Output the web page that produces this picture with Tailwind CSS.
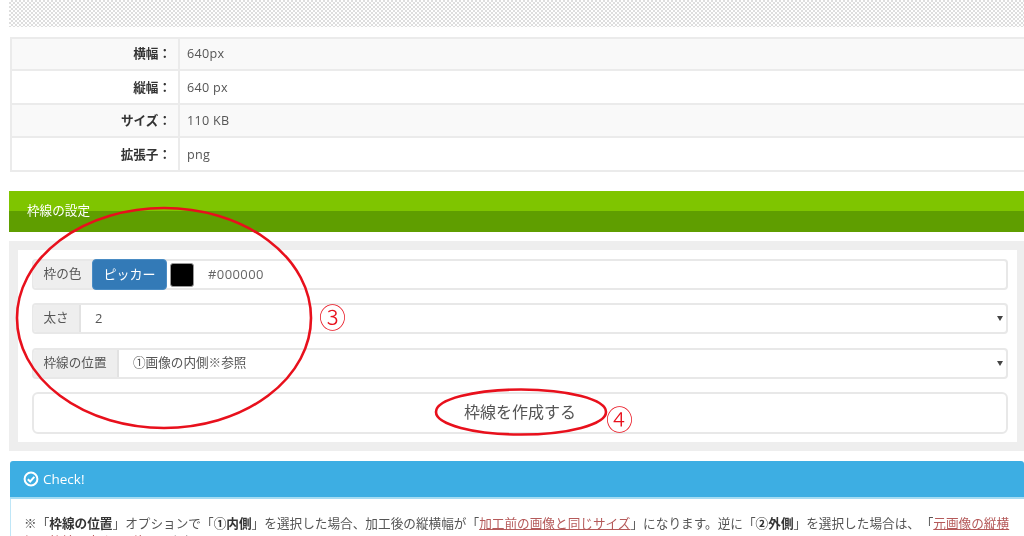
<!DOCTYPE html>
<html lang="ja">
<head>
<meta charset="utf-8">
<script src="https://cdn.jsdelivr.net/npm/@tailwindcss/browser@4"></script>
</head>
<body class="bg-white">
<div class="relative w-[1024px] h-[536px] overflow-hidden bg-white font-['Open_Sans','Noto_Sans_CJK_JP',sans-serif] text-[12.6px] text-[#555] blur-[0.35px]">
  <div class="ml-[9px] h-[27px] bg-[repeating-conic-gradient(#dedede_0_25%,#fff_0_50%)] bg-[length:4px_4px]"></div>

  <div class="ml-[10px] mt-[10px] border-2 border-[#ebebeb] border-r-0 text-[12.6px]">
    <div class="flex h-[32px] items-center bg-[#f9f9f9] border-b-2 border-[#ebebeb]">
      <div class="w-[168px] h-full flex items-center justify-end pr-[7px] border-r-2 border-[#ebebeb] font-bold text-[#333]">横幅：</div>
      <div class="pl-[7px] tracking-[0.3px]">640px</div>
    </div>
    <div class="flex h-[34px] items-center bg-white border-b-2 border-[#ebebeb]">
      <div class="w-[168px] h-full flex items-center justify-end pr-[7px] pt-[2px] border-r-2 border-[#ebebeb] font-bold text-[#333]">縦幅：</div>
      <div class="pl-[7px] pt-[2px] tracking-[0.3px]">640 px</div>
    </div>
    <div class="flex h-[33px] items-center bg-[#f9f9f9] border-b-2 border-[#ebebeb]">
      <div class="w-[168px] h-full flex items-center justify-end pr-[7px] pt-[2px] border-r-2 border-[#ebebeb] font-bold text-[#333]">サイズ：</div>
      <div class="pl-[7px] pt-[2px] tracking-[0.3px]">110 KB</div>
    </div>
    <div class="flex h-[32px] items-center bg-white">
      <div class="w-[168px] h-full flex items-center justify-end pr-[7px] pt-[2px] border-r-2 border-[#ebebeb] font-bold text-[#333]">拡張子：</div>
      <div class="pl-[7px] pt-[2px] tracking-[0.3px]">png</div>
    </div>
  </div>

  <div class="ml-[9px] mt-[19px] h-[41px] flex items-center pl-[18px] text-[12.6px] text-white bg-[linear-gradient(#7fc500_0,#7fc500_50%,#5f9e00_50%,#5f9e00_100%)]">枠線の設定</div>

  <div class="ml-[9px] mt-[9px] h-[210px] bg-[#eeeeee] py-[9px] pl-[9px] pr-[7px]">
    <div class="h-[192px] bg-white pl-[14px] pr-[9px] pt-[9px] flex flex-col">
      <div class="flex h-[31px] items-stretch border-2 border-[#e8e8e8] rounded-[4px] bg-white">
        <div class="w-[59px] -ml-[1px] flex items-center justify-center bg-[#eeeeee] text-[12.6px] text-[#555] rounded-l-[4px]">枠の色</div>
        <div class="w-[75px] -my-[2px] flex items-center justify-center bg-[#337ab7] border border-[#4a8cc4] rounded-[4px] text-[13px] text-white">ピッカー</div>
        <div class="w-[24px] h-[24px] ml-[3px] self-center bg-black rounded-[3px] border border-[#999]"></div>
        <div class="ml-[14px] flex items-center text-[13px] text-[#666] tracking-[0.4px]">#000000</div>
      </div>
      <div class="flex h-[31px] mt-[13px] items-stretch border-2 border-[#e8e8e8] rounded-[4px] bg-white">
        <div class="w-[48px] -ml-[1px] flex items-center justify-center bg-[#eeeeee] border-r-2 border-[#e2e2e2] text-[12.6px] text-[#555] rounded-l-[4px]">太さ</div>
        <div class="flex-1 flex items-center pl-[14px] text-[13px] text-[#555]">2</div>
        <div class="flex items-center pr-[3px]"><svg width="6" height="5" viewBox="0 0 6 5"><path d="M0 0H6L3 5Z" fill="#444"/></svg></div>
      </div>
      <div class="flex h-[31px] mt-[14px] items-stretch border-2 border-[#e8e8e8] rounded-[4px] bg-white">
        <div class="w-[86px] -ml-[1px] flex items-center justify-center bg-[#eeeeee] border-r-2 border-[#e2e2e2] text-[12.6px] text-[#555] rounded-l-[4px]">枠線の位置</div>
        <div class="flex-1 flex items-center pl-[14px] text-[12.6px] text-[#555]">①画像の内側※参照</div>
        <div class="flex items-center pr-[3px]"><svg width="6" height="5" viewBox="0 0 6 5"><path d="M0 0H6L3 5Z" fill="#444"/></svg></div>
      </div>
      <div class="flex h-[42px] mt-[13px] pb-[3px] items-center justify-center border-2 border-[#e8e8e8] rounded-[6px] bg-white text-[16px] text-[#555]">枠線を作成する</div>
    </div>
  </div>

  <div class="ml-[10px] mt-[10px] h-[38px] flex items-center gap-[4px] pl-[13px] bg-[#3daee3] rounded-t-[3px] border-b-2 border-[#a5dcf3] text-[13.5px] text-white">
    <svg class="w-[16px] h-[16px]" viewBox="0 0 16 16" fill="none"><circle cx="8" cy="8" r="6.4" stroke="#fff" stroke-width="2"/><path d="M4.8 8.2 7.2 10.5 11.3 5.9" stroke="#fff" stroke-width="2"/></svg>
    <span>Check!</span>
  </div>
  <div class="ml-[10px] border-l border-[#bfe6f7] pl-[13px] pt-[15px] text-[12.65px] leading-[18px] text-[#555] w-[1004px]">※「<b class="text-[#333]">枠線の位置</b>」オプションで「<b class="text-[#333]">①内側</b>」を選択した場合、加工後の縦横幅が「<span class="underline text-[#b55a5a]">加工前の画像と同じサイズ</span>」になります。逆に「<b class="text-[#333]">②外側</b>」を選択した場合は、<span class="ml-[7px]">「</span><span class="underline text-[#b55a5a]">元画像の縦横幅＋枠線の太さの2倍</span>」になります。</div>

  <svg class="absolute left-0 top-0 pointer-events-none" width="1024" height="536" viewBox="0 0 1024 536" fill="none">
    <ellipse cx="164" cy="318" rx="147" ry="110" stroke="#e8101c" stroke-width="2.6"/>
    <ellipse cx="521" cy="412" rx="85" ry="22.5" stroke="#e8101c" stroke-width="2.6"/>
  </svg>
  <div class="absolute left-[319px] top-[300px] font-light text-[27px] leading-[36px] text-[#e8101c]">③</div>
  <div class="absolute left-[606px] top-[402px] font-light text-[27px] leading-[36px] text-[#e8101c]">④</div>
</div>
</body>
</html>
